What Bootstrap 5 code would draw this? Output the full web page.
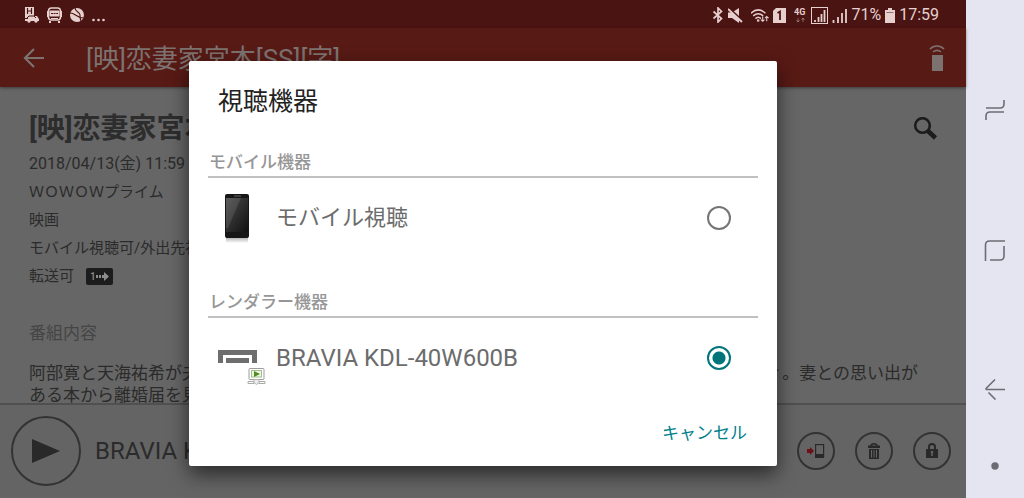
<!DOCTYPE html>
<html lang="ja">
<head>
<meta charset="utf-8">
<meta name="viewport" content="width=device-width, initial-scale=1">
<title>視聴機器</title>
<link href="https://cdn.jsdelivr.net/npm/bootstrap@5.3.0/dist/css/bootstrap.min.css" rel="stylesheet">
<script src="https://cdn.jsdelivr.net/npm/bootstrap@5.3.0/dist/js/bootstrap.bundle.min.js"></script>
<style>
  body { font-family: Roboto, "Noto Sans CJK JP", sans-serif; background: #666; color: #2b2b2b; }
  svg { display: block; flex: none; }
  .screen { min-width: 0; }
  .status-bar { background: #4a1413; color: #e6cfcd; height: 28px; flex: none; padding: 2px 27px 0 24px; font-size: 16px; }
  .app-bar { background: #581a15; color: #7c7371; height: 59px; flex: none; padding: 0 20px 0 22px; box-shadow: 0 1px 3px #0006; font-size: 26px; position: relative; }
  .app-title { padding: 3px 0 0 40px; }
  .icon-btn { background: none; border: 0; padding: 0; color: inherit; }
  .program { padding: 22px 28px 0 29px; min-height: 0; }
  .program h1 { font-size: 28px; line-height: 40px; font-weight: 700; margin: 0; color: #2d2d2d; }
  .facts { font-size: 15px; line-height: 28px; padding-top: 1px; }
  .air-date { font-size: 16px; }
  .transfer { background: #1c1c1c; color: #8d8d8d; border-radius: 2px; margin-left: 12px; }
  .program h2 { font-size: 17px; line-height: 26px; font-weight: 400; margin: 30px 0 16px; color: #454545; }
  .program p { font-size: 17px; line-height: 22px; margin: 0; padding-right: 12px; }
  .player { background: #646464; border-top: 2px solid #505050; height: 95px; flex: none; padding: 0 15px 2px 11px; font-size: 24px; }
  .now-on { padding-left: 14px; }
  .ring { border: 2px solid #333; border-radius: 50%; width: 38px; height: 38px; color: #292929; }
  .ring-lg { width: 70px; height: 70px; }
  .side-nav { width: 58px; flex: none; background: #e5e5f1; color: #6c6c74; padding: 97px 0 24px; }
  .hide-nav { margin-top: 58px; }
  .overlay { inset: 28px 0 0 0; }
  .device-dialog { width: 588px; max-width: 90%; background: #fff; border-radius: 2px; box-shadow: 0 8px 20px #0009; padding: 24px 19px 15px; }
  .device-dialog h2 { font-size: 25px; line-height: 34px; font-weight: 400; color: #222; margin: 0 0 30px; padding-left: 10px; }
  .group-label { font-size: 17px; line-height: 26px; font-weight: 500; color: #969696; border-bottom: 2px solid #c0c0c0; margin: 0; padding: 0 0 1px 1px; }
  .device { height: 80px; font-size: 22px; color: #6c6c6c; padding: 0 27px 0 10px; }
  .device-latin { font-size: 24px; }
  .pic { width: 58px; }
  .next-group { margin-top: 31px; }
  .device .form-check-input { width: 24px; height: 24px; margin: 0; border: 2px solid #757575; box-shadow: none; background-color: #fff; }
  .device .form-check-input:checked { border-color: #00747b; background-image: radial-gradient(circle, #00747b 6px, #fff 7px); }
  .actions { padding-top: 17px; }
  .cancel { color: #00818a; font-size: 17px; line-height: 26px; padding: 5px 11px; border: 0; background: none; }
</style>
</head>
<body class="d-flex vh-100 overflow-hidden">
<div class="screen d-flex flex-column flex-fill position-relative">
  <div class="status-bar d-flex align-items-center">
    <div class="d-flex align-items-center gap-2">
      <svg width="15" height="16" viewBox="0 0 15 16"><path d="M1 0h9v9h3l2 3v2H1z" fill="currentColor"/><path d="M3.500 1v6M7.500 1v6M3.500 4h4" stroke="#4a1413" stroke-width="1.200"/><path d="M3 11l2-2h5l2 2M1 11.500h3" stroke="#4a1413" fill="none"/><circle cx="5" cy="14" r="1.700" fill="currentColor"/><circle cx="12" cy="14" r="1.700" fill="currentColor"/></svg>
      <svg width="15" height="16" viewBox="0 0 15 16" fill="none" stroke="currentColor"><rect x="1.500" y="1" width="12" height="12" rx="3" stroke-width="1.600"/><path d="M.5 4v6M14.500 4v6M3 14v2M12 14v2" stroke-width="2"/><path d="M3 4h9v5H3z" fill="currentColor"/><path d="M4 6.500h7" stroke="#4a1413" stroke-dasharray="2 .6"/><path d="M4 11.500h7"/></svg>
      <svg width="14" height="14" viewBox="0 0 14 14"><circle cx="7" cy="7" r="7" fill="currentColor"/><path d="M0 5c5-.5 6 5 14 5M5 0c0 4 5 4 5 7 0 2 0 4 1 6" stroke="#4a1413" fill="none" stroke-width="1.100"/></svg>
      <svg width="14" height="14" viewBox="0 0 14 14" fill="currentColor"><circle cx="1.500" cy="12" r="1.300"/><circle cx="6.500" cy="12" r="1.300"/><circle cx="11.500" cy="12" r="1.300"/></svg>
    </div>
    <div class="d-flex align-items-center ms-auto gap-1">
      <svg width="12" height="16" viewBox="0 0 12 16" fill="none" stroke="currentColor" stroke-width="1.700"><path d="M1.500 4.500l8 7L6 15V1l3.500 3.500-8 7"/></svg>
      <svg class="me-1" width="15" height="15" viewBox="0 0 15 15"><path d="M0 4.500h4L11 0v15L4 10H0z" fill="currentColor"/><path d="M1 0l14 13" stroke="#4a1413" stroke-width="1.800"/><path d="M0 1l14 13" stroke="currentColor" stroke-width="1.800"/></svg>
      <svg width="18" height="15" viewBox="0 0 20 15" fill="none" stroke="currentColor" stroke-width="1.700"><path d="M0 5c5-5 11-5 16 0M2.500 8c3.500-3 7.500-3 11 0M5 11c2-2 4-2 6 0"/><circle cx="8" cy="13" r=".6"/><path d="M13 8.500V14M11 12l2 2 2-2M17.500 14V8.500M15.500 10.500l2-2 2 2" stroke-width="1.200"/></svg>
      <svg class="me-1" width="13" height="15" viewBox="0 0 13 15"><path d="M3 0h10v15H0V3z" fill="currentColor"/><path d="M4.500 5l2.500-1.500V12" fill="none" stroke="#4a1413" stroke-width="1.800"/></svg>
      <svg width="13" height="16" viewBox="0 0 13 16"><text x="0" y="8" font-size="9" font-weight="700" fill="currentColor">4G</text><path d="M4 15v-4M2.500 13L4 15l1.500-2M9 11v4M7.500 13L9 11l1.500 2" stroke="currentColor" opacity=".4" fill="none"/></svg>
      <svg width="17" height="17" viewBox="0 0 17 17" fill="none" stroke="currentColor"><rect x=".5" y=".5" width="16" height="16"/><path d="M4 15v-2M7.500 15v-5M10.500 15V7M13.500 15V3" stroke-width="1.800"/></svg>
      <svg width="15" height="15" viewBox="0 0 15 15" fill="none" stroke="currentColor" stroke-width="1.800"><path d="M1.500 15v-3M6 15V9M10 15V5M14 15V1"/></svg>
      <span>71%</span>
      <svg width="10" height="15" viewBox="0 0 10 15"><path d="M3 0h4v2h3v13H0V2h3z" fill="currentColor"/><path d="M1.500 4.500h7" stroke="#4a1413" opacity=".5"/></svg>
      <span>17:59</span>
    </div>
  </div>
  <header class="app-bar d-flex align-items-center">
    <button class="icon-btn" aria-label="戻る"><svg width="24" height="24" viewBox="0 0 24 24" fill="none" stroke="currentColor" stroke-width="2.200"><path d="M22 12H4M12 3l-9 9 9 9"/></svg></button>
    <span class="app-title">[映]恋妻家宮本[SS][字]</span>
    <button class="icon-btn ms-auto" aria-label="リモコン"><svg width="18" height="28" viewBox="0 0 18 28" fill="none" stroke="currentColor" stroke-width="1.600"><path d="M2 5c4-4 10-4 14 0M5 8c2.500-2 5.500-2 8 0"/><path d="M4 11h11v16H4z" fill="currentColor" stroke="none"/></svg></button>
  </header>
  <main class="program flex-fill overflow-hidden">
    <div class="d-flex align-items-center">
      <h1 class="flex-fill">[映]恋妻家宮本[SS][字]</h1>
      <button class="icon-btn" aria-label="検索"><svg width="25" height="25" viewBox="0 0 25 25" fill="none" stroke="#1c1c1c"><circle cx="9.500" cy="8.500" r="7.300" stroke-width="2.600"/><path d="M14.500 13.500l8 7.500" stroke-width="4.500"/></svg></button>
    </div>
    <div class="facts">
      <div class="air-date">2018/04/13(金) 11:59</div>
      <div>ＷＯＷＯＷプライム</div>
      <div>映画</div>
      <div>モバイル視聴可/外出先視聴可</div>
      <div class="d-flex align-items-center">転送可
        <svg class="transfer" width="27" height="17" viewBox="0 0 27 17"><text x="4" y="12" font-size="10" font-weight="500" fill="currentColor">1</text><path d="M10 7h2v3h-2zM13 7h2v3h-2zM16 7h2V4l5 4.500-5 4.500v-3h-2z" fill="currentColor"/></svg>
      </div>
    </div>
    <h2>番組内容</h2>
    <p>阿部寛と天海祐希が夫婦役で共演し、結婚 25年を迎えた熟年夫婦のすれ違いを描いた感動コメディ。妻との思い出がある本から離婚届を見つけてしまう。</p>
  </main>
  <footer class="player d-flex align-items-center">
    <button class="icon-btn ring ring-lg d-flex align-items-center justify-content-center" aria-label="再生"><svg width="28" height="24" viewBox="0 0 28 24" fill="currentColor"><path d="M0 0l28 12L0 24z"/></svg></button>
    <span class="now-on flex-fill">BRAVIA KDL-40W600B</span>
    <div class="d-flex gap-3">
      <button class="icon-btn ring d-flex align-items-center justify-content-center me-1" aria-label="転送"><svg width="18" height="16" viewBox="0 0 18 16"><path d="M0 6h3V4l4 4-4 4v-2H0z" fill="#6b1218"/><rect x="8.600" y="1.600" width="8" height="12" fill="none" stroke="currentColor" stroke-width="1.200"/><path d="M8 11h9v4H8z" fill="currentColor"/></svg></button>
      <button class="icon-btn ring d-flex align-items-center justify-content-center me-1" aria-label="削除"><svg width="12" height="16" viewBox="0 0 12 16"><path d="M0 2.500h12V5H0zM1 6h10v10H1z" fill="currentColor"/><path d="M3 3c0-3 6-3 6 0" fill="none" stroke="currentColor" stroke-width="1.500"/><path d="M3.500 7v7.500M6 7v7.500M8.500 7v7.500" stroke="#646464"/></svg></button>
      <button class="icon-btn ring d-flex align-items-center justify-content-center" aria-label="保護"><svg width="12" height="16" viewBox="0 0 12 16"><path d="M0 6h12v9H0z" fill="currentColor"/><path d="M3 7V4c0-4 6-4 6 0v3" fill="none" stroke="currentColor" stroke-width="2"/><path d="M6 9v4" stroke="#646464" stroke-width="1.500"/><circle cx="6" cy="9" r="1.300" fill="#646464"/></svg></button>
    </div>
  </footer>

  <div class="overlay position-absolute d-flex align-items-center justify-content-center">
    <form class="device-dialog" role="dialog" aria-labelledby="dlg-title">
      <h2 id="dlg-title">視聴機器</h2>
      <h3 class="group-label">モバイル機器</h3>
      <div class="device d-flex align-items-center">
        <div class="pic">
          <svg width="36" height="50" viewBox="0 0 36 50">
            <defs>
              <linearGradient id="glass" x1="0" y1="0" x2="1" y2="1"><stop offset="0" stop-color="#4b4b4b"/><stop offset="1" stop-color="#101010"/></linearGradient>
              <linearGradient id="reflection" x1="0" y1="0" x2="0" y2="1"><stop offset="0" stop-color="#aaa"/><stop offset="1" stop-color="#fff"/></linearGradient>
            </defs>
            <path d="M8 44h22v6H8z" fill="url(#reflection)"/><rect x="7" y="1" width="24" height="44" rx="2" fill="#161616"/><path d="M8 5h22v34H8z" fill="url(#glass)"/><path d="M8 5h15L10 35H8z" fill="#fff" opacity=".1"/><path d="M16 3h7" stroke="#666"/>
          </svg>
        </div>
        <label class="flex-fill" for="dev-mobile">モバイル視聴</label>
        <input class="form-check-input" type="radio" name="device" id="dev-mobile">
      </div>
      <h3 class="group-label next-group">レンダラー機器</h3>
      <div class="device device-latin d-flex align-items-center">
        <div class="pic">
          <svg width="48" height="54" viewBox="0 0 48 54">
            <path d="M0 19h39v13h-5v-8H5v8H0z" fill="#6e6e6e"/><path d="M8 27h23v5H8z" fill="#6e6e6e"/>
            <rect x="31" y="37.500" width="15" height="11" rx="1" fill="#fff" stroke="#9b9b9b"/><rect x="33.500" y="39.500" width="10" height="6.500" fill="#eef5e6" stroke="#a3bd8b"/><path d="M36 40l6 3-6 3z" fill="#4f8d1c"/><path d="M30 50.500h6v2h-6zM41 50.500h6v2h-6z" fill="#fff" stroke="#aaa"/><path d="M36 48.500h5v3l-2.500 2-2.500-2z" fill="#ececec" stroke="#b5b5b5"/>
          </svg>
        </div>
        <label class="flex-fill" for="dev-tv">BRAVIA KDL-40W600B</label>
        <input class="form-check-input" type="radio" name="device" id="dev-tv" checked>
      </div>
      <div class="actions text-end"><button type="button" class="cancel">キャンセル</button></div>
    </form>
  </div>
</div>
<nav class="side-nav d-flex flex-column align-items-center" aria-label="ナビゲーション">
  <div class="flex-fill d-flex flex-column align-items-center justify-content-between">
    <button class="icon-btn" aria-label="履歴"><svg width="22" height="26" viewBox="0 0 22 26" fill="none" stroke="currentColor" stroke-width="1.600"><path d="M2 11h14q4 0 4-4V3M20 15H6q-4 0-4 4v4"/></svg></button>
    <button class="icon-btn" aria-label="ホーム"><svg width="22" height="22" viewBox="0 0 22 22" fill="none" stroke="currentColor" stroke-width="1.600"><path d="M1.500 21V5q0-4 4-4H21M20 6v10q0 4-4 4H6"/></svg></button>
    <button class="icon-btn" aria-label="戻る"><svg width="22" height="22" viewBox="0 0 22 22" fill="none" stroke="currentColor" stroke-width="1.600"><path d="M21 11.500H2.500q-1-.5 0-1.500L11 1.500M4.500 14.500l7 7"/></svg></button>
  </div>
  <button class="icon-btn hide-nav" aria-label="ナビゲーションバーを隠す"><svg width="16" height="16" viewBox="0 0 16 16"><circle cx="8" cy="8" r="3.700" fill="currentColor"/></svg></button>
</nav>
</body>
</html>
